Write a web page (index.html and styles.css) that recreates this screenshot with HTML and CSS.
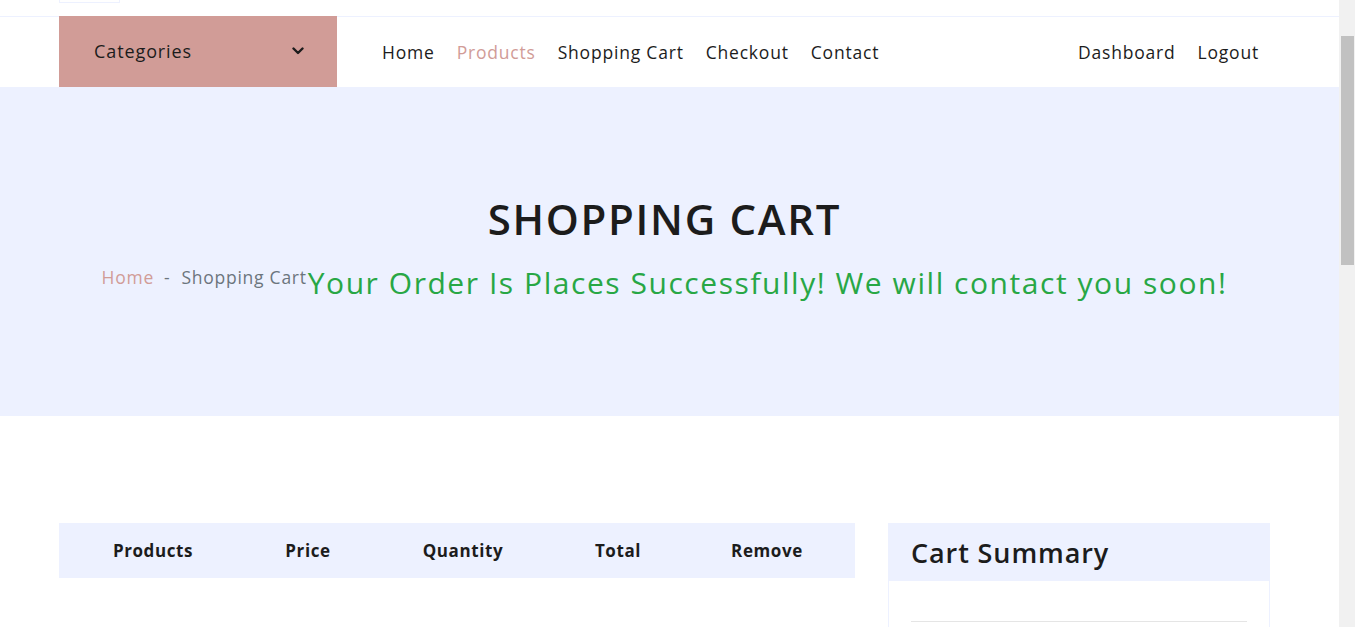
FILE: index.html
```html
<!DOCTYPE html>
<html lang="en">
<head>
<meta charset="utf-8">
<title>Shopping Cart</title>
<link rel="stylesheet" href="styles.css">
</head>
<body>
  <div class="page">
    <div class="topbar">
      <div class="topbar-box"></div>
    </div>
    <nav class="navrow">
      <div class="categories">
        <span>Categories</span>
        <svg class="chev" width="12" height="8" viewBox="0 0 12 8"><path d="M1.5 1.5 L6 6 L10.5 1.5" fill="none" stroke="#1c1c1c" stroke-width="2.4" stroke-linecap="round" stroke-linejoin="round"/></svg>
      </div>
      <div class="links">
        <a class="link">Home</a>
        <a class="link active">Products</a>
        <a class="link">Shopping Cart</a>
        <a class="link">Checkout</a>
        <a class="link">Contact</a>
      </div>
      <div class="links right">
        <a class="link">Dashboard</a>
        <a class="link">Logout</a>
      </div>
    </nav>
    <header class="hero">
      <h1 class="hero-title">SHOPPING CART</h1>
      <div class="hero-line">
        <div class="crumbs">
          <span class="crumb-home">Home</span>
          <span class="crumb-sep">-</span>
          <span class="crumb-cur">Shopping Cart</span>
        </div>
        <span class="success">Your Order Is Places Successfully! We will contact you soon!</span>
      </div>
    </header>
    <main class="cart">
      <div class="table-col">
        <div class="thead">
          <div class="th th-products">Products</div>
          <div class="th th-price">Price</div>
          <div class="th th-qty">Quantity</div>
          <div class="th th-total">Total</div>
          <div class="th th-remove">Remove</div>
        </div>
      </div>
      <aside class="summary">
        <div class="summary-head">Cart Summary</div>
        <div class="summary-body">
          <div class="summary-rule"></div>
        </div>
      </aside>
    </main>
  </div>
  <div class="scrollbar"><div class="thumb"></div></div>
</body>
</html>
```

FILE: styles.css
```css
* { box-sizing: border-box; }
html, body { margin: 0; padding: 0; }
body {
  font-family: "Open Sans", "Liberation Sans", sans-serif;
  color: #1c1c1c;
  background: #fff;
}
.page {
  width: 1339px;
  min-height: 800px;
}
.topbar {
  height: 17px;
  border-bottom: 1px solid #edf1ff;
  padding-left: 59px;
}
.topbar-box {
  width: 61px;
  height: 3px;
  border: 1px solid #edf1ff;
  border-top: none;
}
.navrow {
  display: flex;
  align-items: center;
  height: 70px;
  padding-left: 59px;
  padding-right: 80px;
}
.categories {
  align-self: flex-start;
  margin-top: -1px;
  width: 278px;
  height: 71px;
  background: #d19c97;
  display: flex;
  align-items: center;
  justify-content: space-between;
  padding: 0 33px 0 35px;
  font-size: 18px;
  font-weight: 500;
  letter-spacing: 0.9px;
}
.categories span { position: relative; top: -1px; }
.chev { position: relative; top: -1px; }
.links {
  display: flex;
  gap: 22px;
  margin-left: 45px;
}
.links.right { margin-left: auto; }
.link {
  font-size: 17.5px;
  letter-spacing: 0.8px;
  color: #1c1c1c;
  text-decoration: none;
}
.link.active { color: #d19c97; }
.hero {
  background: #edf1ff;
  height: 329px;
  display: flex;
  flex-direction: column;
  align-items: center;
  padding: 104px 69px 0 59px;
}
.hero-title {
  margin: 0;
  font-size: 42px;
  font-weight: 600;
  letter-spacing: 1.7px;
  line-height: 56px;
  color: #1c1c1c;
}
.hero-line {
  margin-top: 15px;
  display: flex;
  align-items: center;
  white-space: nowrap;
}
.crumbs {
  display: flex;
  align-items: center;
  font-size: 17.5px;
  letter-spacing: 0.75px;
  position: relative;
  top: -6px;
}
.crumb-home { color: #d19c97; }
.crumb-sep { color: #6c757d; margin: 0 11px 0 10px; }
.crumb-cur { color: #6c757d; }
.success {
  color: #28a745;
  font-size: 30px;
  font-weight: 400;
  letter-spacing: 1.55px;
  margin-left: 1px;
}
.cart {
  display: flex;
  align-items: flex-start;
  padding: 107px 0 0 59px;
  gap: 33px;
}
.table-col { width: 796px; }
.thead {
  display: flex;
  height: 55px;
  align-items: center;
  background: #edf1ff;
}
.th {
  text-align: center;
  font-size: 17px;
  font-weight: 700;
  letter-spacing: 0.6px;
}
.th-products { width: 188px; }
.th-price { width: 122px; }
.th-qty { width: 188px; }
.th-total { width: 122px; }
.th-remove { width: 176px; }
.summary {
  width: 382px;
  border: 1px solid #edf1ff;
  border-top: none;
}
.summary-head {
  background: #edf1ff;
  height: 58px;
  display: flex;
  align-items: center;
  padding-left: 23px;
  margin: 0 -1px;
  font-size: 27px;
  font-weight: 600;
  letter-spacing: 0.9px;
}
.summary-body {
  padding: 40px 22px 60px 22px;
}
.summary-rule {
  border-top: 1px solid #e5e5e5;
}
.scrollbar {
  position: fixed;
  top: 0;
  right: 0;
  width: 16px;
  height: 100%;
  background: #f1f1f1;
}
.thumb {
  position: absolute;
  top: 36px;
  left: 2px;
  width: 13px;
  height: 229px;
  background: #c1c1c1;
}
```
